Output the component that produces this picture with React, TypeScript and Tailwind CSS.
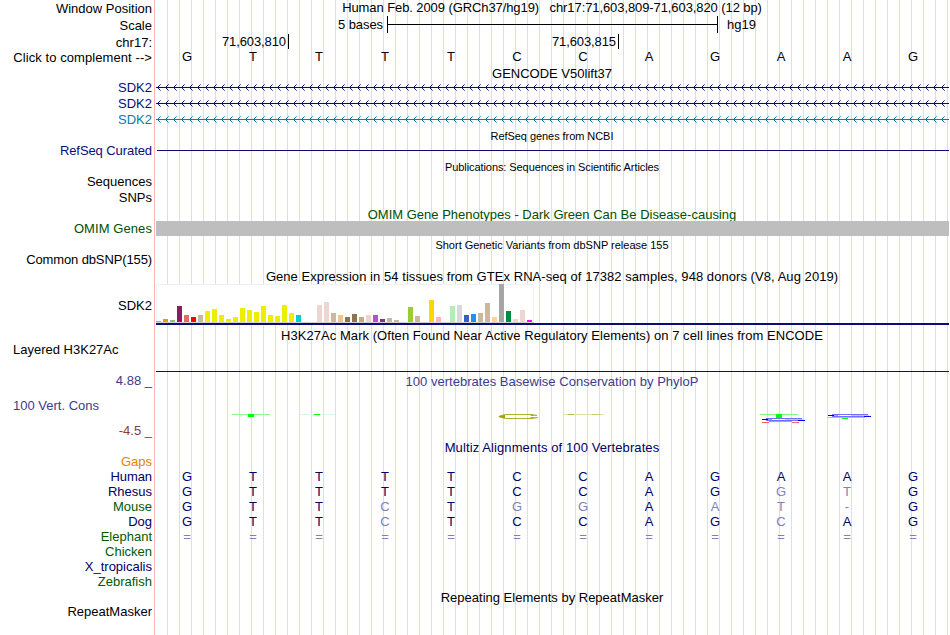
import React from "react";

const labels = [
  { text: "Window Position", style: "mt-[1px] text-right" },
  { text: "Scale", style: "mt-[2px] text-right" },
  { text: "chr17:", style: "mt-[2px] text-right" },
  { text: "Click to complement -->", style: "text-right tracking-[0.08px]" },
  { text: "SDK2", style: "mt-[15px] text-right text-[#0c0c78]" },
  { text: "SDK2", style: "mt-[1px] text-right text-[#0c0c78]" },
  { text: "SDK2", style: "mt-[1px] text-right text-[#0c78b4]" },
  { text: "RefSeq Curated", style: "mt-[16px] text-right text-[#0c0c78] tracking-[-0.08px]" },
  { text: "Sequences", style: "mt-[16px] text-right" },
  { text: "SNPs", style: "mt-[1px] text-right" },
  { text: "OMIM Genes", style: "mt-[16px] text-right text-[#005000] tracking-[0.08px]" },
  { text: "Common dbSNP(155)", style: "mt-[16px] text-right tracking-[-0.12px]" },
  { text: "SDK2", style: "mt-[31px] text-right" },
  { text: "Layered H3K27Ac", style: "mt-[29px] pl-[13px]" },
  { text: "4.88 _", style: "mt-[16px] text-right text-[#3c3c8c]" },
  { text: "100 Vert. Cons", style: "mt-[10px] pl-[13px] text-[#3c3c8c]" },
  { text: "-4.5 _", style: "mt-[10px] text-right text-[#8c3c3c]" },
  { text: "Gaps", style: "mt-[16px] text-right text-[#e68200]" },
  { text: "Human", style: "text-right text-[#000064] tracking-[-0.1px]" },
  { text: "Rhesus", style: "text-right text-[#000064]" },
  { text: "Mouse", style: "text-right text-[#005a00]" },
  { text: "Dog", style: "text-right text-[#000064]" },
  { text: "Elephant", style: "text-right text-[#005a00]" },
  { text: "Chicken", style: "text-right text-[#005a00]" },
  { text: "X_tropicalis", style: "text-right text-[#000064]" },
  { text: "Zebrafish", style: "text-right text-[#005a00]" },
  { text: "RepeatMasker", style: "mt-[15px] text-right" },
];

// Median expression per tissue: [bar height, colour]
const tissues: [number, string][] = [
  [1, "#ee9a49"], [3, "#ee9a00"], [2, "#8fbc8f"], [16, "#8b1c62"], [7, "#ee6a50"],
  [5, "#ff0000"], [7, "#cdb79e"], [11, "#eeee00"], [13, "#eeee00"], [7, "#eeee00"],
  [3, "#eeee00"], [5, "#eeee00"], [14, "#eeee00"], [12, "#eeee00"], [10, "#eeee00"],
  [16, "#eeee00"], [7, "#eeee00"], [6, "#eeee00"], [17, "#eeee00"], [9, "#eeee00"],
  [7, "#00cdcd"], [0, "#ee82ee"], [0, "#9ac0cd"], [17, "#eed5d2"], [20, "#eed5d2"],
  [9, "#cdb79e"], [7, "#eec591"], [5, "#8b7355"], [8, "#8b7355"], [5, "#cdaa7d"],
  [7, "#eed5d2"], [7, "#b452cd"], [3, "#7a378b"], [4, "#cdb79e"], [2, "#cdb79e"],
  [0, "#cdb79e"], [15, "#9acd32"], [6, "#cdb79e"], [0, "#7a67ee"], [22, "#ffd700"],
  [5, "#ffb6c1"], [0, "#cd9b1d"], [16, "#b4eeb4"], [17, "#d9d9d9"], [7, "#3a5fcd"],
  [8, "#1e90ff"], [9, "#cdb79e"], [19, "#cdb79e"], [5, "#ffd39b"], [38, "#a6a6a6"],
  [11, "#008b45"], [3, "#eed5d2"], [12, "#eed5d2"], [2, "#ff00ff"],
];

const sequence = "GTTTTCCAGAAG";
const alignments = ["GTTTTCCAGAAG", "GTTTTCCAGGTG", "GTTCTGGAAT-G", "GTTCTCCAGCAG", "============"];

const Title = ({ text, className = "" }: { text: string; className?: string }) => (
  <div className={`h-[15px] text-center whitespace-pre ${className}`}>{text}</div>
);

const SmallTitle = ({ text, className = "" }: { text: string; className?: string }) => (
  <div className={`h-[12px] text-center text-[11px] leading-[12px] ${className}`}>{text}</div>
);

const Bases = ({ bases, align = false }: { bases: string; align?: boolean }) => (
  <div className="-ml-[1px] grid h-[15px] w-[792px] grid-cols-12 text-center">
    {bases.split("").map((base, i) => (
      <span
        key={i}
        className={!align ? "" : base === sequence[i] ? "text-[#000064]" : "text-[#8080b4]"}
      >
        {base}
      </span>
    ))}
  </div>
);

// Intron line with strand arrows
const GeneLine = ({ className = "" }: { className?: string }) => (
  <svg width="793" height="7" className={`ml-[1px] block shrink-0 ${className}`} shapeRendering="crispEdges">
    <rect x="0" y="3" width="793" height="1" fill="currentColor" />
    {Array.from({ length: 99 }, (_, i) => (
      <g key={i} transform={`translate(${i * 8} 0)`} fill="currentColor">
        <path d="M2 2h1v1h-1zM3 1h1v1h-1zM2 4h1v1h-1zM3 5h1v1h-1z" />
        <path d="M4 0h1v1h-1zM4 6h1v1h-1z" opacity="0.6" />
      </g>
    ))}
  </svg>
);

const Expression = () => (
  <div className="ml-[1px] h-[41px] w-[793px]">
    <div className="flex h-[38px] w-[378px] items-end border-t border-r border-l border-[#f0f0f0] bg-white">
      <div className="-ml-[1px] flex h-[38px] items-end gap-[2px]">
        {tissues.map(([height, color], i) => (
          <div key={i} className="w-[5px]" style={{ height, backgroundColor: color }} />
        ))}
      </div>
    </div>
    <div className="h-[1px] w-[378px] bg-[#d2d2d2]" />
    <div className="h-[2px] bg-[#0c0c78]" />
  </div>
);

// Per-base conservation logo
const Conservation = () => (
  <svg width="795" height="51" viewBox="155 389 795 51" className="block">
    <rect x="232" y="414" width="38" height="1" fill="#90f890" />
    <rect x="248" y="414" width="6" height="3" fill="#00ff00" />
    <rect x="298" y="414" width="37" height="1" fill="#d8f8dc" />
    <rect x="314" y="414" width="6" height="1" fill="#00ff00" />

    <path d="M537 415.5L532 414.5H506L501 415.5L499 416.5L501 417.5L506 418.5H532L538 417.5" fill="none" stroke="#a8a818" strokeWidth="0.9" />
    <path d="M498 416.5L505 414.8V418.2Z" fill="#a0a000" />
    <path d="M530 414.5L538 415.5L531 416Z M530 418.5L538 417.5L531 417Z" fill="#a8a818" />
    <rect x="564" y="414" width="40" height="1" fill="#dedea0" />
    <rect x="568" y="414" width="6" height="1" fill="#baba50" />
    <rect x="592" y="414" width="8" height="1" fill="#cccc78" />

    <rect x="760" y="414" width="38" height="1" fill="#80f880" />
    <rect x="776" y="414" width="6" height="4" fill="#00ff00" />
    <path d="M766 418.5H802M766 420.5H800" stroke="#7070ff" strokeWidth="1" />
    <path d="M785 419.5H803" stroke="#c4c4ff" strokeWidth="1" />
    <rect x="762" y="419" width="6" height="1" fill="#0000d0" />
    <rect x="768" y="419" width="4" height="1" fill="#a0a0ff" />
    <rect x="798" y="420" width="7" height="1" fill="#0000ff" />
    <path d="M762 422.5H769M792 422.5H799" stroke="#ff6060" strokeWidth="1" />
    <path d="M769 421.5H792" stroke="#ff8080" strokeWidth="1" />

    <path d="M832 414.5H868M832 416.5H866" stroke="#7070ff" strokeWidth="1" />
    <path d="M851 415.5H869" stroke="#c4c4ff" strokeWidth="1" />
    <rect x="828" y="415" width="6" height="1" fill="#0000d0" />
    <rect x="834" y="415" width="4" height="1" fill="#a0a0ff" />
    <rect x="864" y="416" width="7" height="1" fill="#0000ff" />
    <rect x="828" y="417" width="37" height="1" fill="#ffa0a0" />
    <rect x="842" y="418" width="6" height="1" fill="#00ff00" />
  </svg>
);

const App = () => {
  return (
    <div className="flex h-[635px] w-[950px] overflow-hidden bg-white font-['Liberation_Sans',Arial,sans-serif] text-[13px] leading-[15px] text-black">
      {/* Track labels */}
      <div className="flex w-[155px] shrink-0 flex-col border-r border-[#ffb4b4]">
        {labels.map((label, i) => (
          <div key={i} className={`h-[15px] shrink-0 pr-[2px] whitespace-nowrap ${label.style}`}>
            {label.text}
          </div>
        ))}
      </div>

      {/* Tracks, over the vertical guide lines */}
      <div className="flex w-[795px] shrink-0 flex-col bg-[repeating-linear-gradient(to_right,#ffffff_0px,#ffffff_11px,#dcdcf5_11px,#dcdcf5_12px)] bg-[position:1px_0px]">
        <Title text={"Human Feb. 2009 (GRCh37/hg19)   chr17:71,603,809-71,603,820 (12 bp)"} className="w-[794px] tracking-[-0.09px]" />
        <div className="mt-[1px] flex h-[17px]">
          <div className="w-[232px] pt-[1px] pr-[4px] text-right tracking-[-0.08px]">5 bases</div>
          <div className="flex w-[331px] items-center border-x border-black">
            <div className="h-[1px] w-full bg-black" />
          </div>
          <div className="pt-[1px] pl-[9px]">hg19</div>
        </div>
        <div className="mt-[1px] flex h-[15px] text-right tracking-[-0.1px]">
          <div className="w-[134px] border-r border-black pr-[2px]">71,603,810</div>
          <div className="w-[330px] border-r border-black pr-[2px]">71,603,815</div>
        </div>
        <Bases bases={sequence} />

        <Title text="GENCODE V50lift37" className="mt-[2px] w-[794px]" />
        <GeneLine className="mt-[3px] text-[#0c0c78]" />
        <GeneLine className="mt-[9px] text-[#0c0c78]" />
        <GeneLine className="mt-[9px] text-[#0c78b4]" />

        <SmallTitle text="RefSeq genes from NCBI" className="mt-[7px] w-[794px] tracking-[-0.06px]" />
        <div className="mt-[8px] ml-[2px] h-[1px] w-[792px] bg-[#0c0c78]" />
        <SmallTitle text="Publications: Sequences in Scientific Articles" className="mt-[10px] w-[794px] tracking-[-0.08px]" />

        <Title text="OMIM Gene Phenotypes - Dark Green Can Be Disease-causing" className="mt-[34px] w-[794px] text-[#005000]" />
        <div className="-mt-[1px] ml-[1px] h-[15px] w-[793px] bg-[#bebebe]" />
        <SmallTitle text="Short Genetic Variants from dbSNP release 155" className="mt-[3px] w-[794px]" />

        <Title text="Gene Expression in 54 tissues from GTEx RNA-seq of 17382 samples, 948 donors (V8, Aug 2019)" className="mt-[18px] w-[794px] tracking-[0.055px]" />
        <Expression />

        <Title text="H3K27Ac Mark (Often Found Near Active Regulatory Elements) on 7 cell lines from ENCODE" className="mt-[3px] w-[794px] tracking-[0.05px]" />
        <div className="mt-[28px] ml-[1px] h-[1px] w-[793px] bg-[#141450]" />

        <Title text="100 vertebrates Basewise Conservation by PhyloP" className="mt-[2px] w-[794px] text-[#3c3c8c] tracking-[0.02px]" />
        <Conservation />

        <Title text="Multiz Alignments of 100 Vertebrates" className="w-[794px] text-[#000064] tracking-[0.1px]" />
        <div className="mt-[14px]">
          {alignments.map((bases, i) => (
            <Bases key={i} bases={bases} align />
          ))}
        </div>

        <Title text="Repeating Elements by RepeatMasker" className="mt-[46px] w-[794px]" />
      </div>
    </div>
  );
};

export default App;
